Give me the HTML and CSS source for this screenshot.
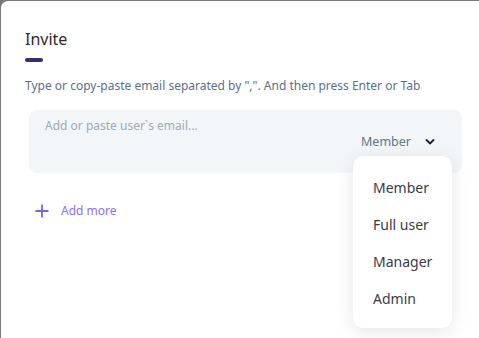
FILE: index.html
```html
<!DOCTYPE html>
<html>
    <head>
        <title>Invite</title>
        <meta name="viewport" content="width=device-width, initial-scale=1.0" />
        <link rel="stylesheet" href="styles.css">
    </head>
    <body>
        <div class="modal">
            <h3 class="title">Invite</h3>
            <div class="titleBar"></div>
            <p class="hint">Type or copy-paste email separated by ",". And then press Enter or Tab</p>
            <div class="emailBox">
                <div class="placeholder">Add or paste user`s email...</div>
                <div class="roleRow">
                    <div class="roleSelect">
                        <span>Member</span>
                        <svg width="10" height="8" viewBox="0 0 10 8">
                            <path d="M1.5 2 L5 5.5 L8.5 2" fill="none" stroke="#1f2937" stroke-width="2" stroke-linecap="round" stroke-linejoin="round" />
                        </svg>
                        <ul class="menu">
                            <li>Member</li>
                            <li>Full user</li>
                            <li>Manager</li>
                            <li>Admin</li>
                        </ul>
                    </div>
                </div>
            </div>
            <div class="addMore">
                <svg width="14" height="14" viewBox="0 0 14 14">
                    <path d="M7 0.5 V13.5 M0.5 7 H13.5" stroke="#7b61e8" stroke-width="1.8" />
                </svg>
                <span>Add more</span>
            </div>
        </div>
    </body>
</html>
```

FILE: styles.css
```css
html,
body {
    margin: 0;
    height: 100%;
}

body {
    background: #7a7a7a;
    font-family: 'Noto Sans', 'Open Sans', sans-serif;
    padding: 1px 0 0 1px;
    box-sizing: border-box;
    overflow: hidden;
}

.modal {
    background: #fff;
    border-radius: 7px 0 0 0;
    height: 100%;
    padding: 27px 17px 0 24px;
    box-sizing: border-box;
}

.title {
    margin: 0;
    font-size: 16px;
    font-weight: 400;
    color: #2b2b2b;
    line-height: 22px;
}

.titleBar {
    width: 18px;
    height: 4px;
    border-radius: 2px;
    background: #3b2c6b;
    margin-top: 8px;
}

.hint {
    margin: 16px 0 0;
    font-size: 12px;
    line-height: 16px;
    color: #5b6f86;
}

.emailBox {
    margin: 16px 0 0 4px;
    background: #f3f6f9;
    border-radius: 8px;
    height: 63px;
    padding: 7px 27px 0 16px;
    box-sizing: border-box;
}

.placeholder {
    font-size: 12px;
    line-height: 18px;
    color: #a1a9b2;
}

.roleRow {
    display: flex;
    justify-content: flex-end;
    margin-top: -2px;
}

.roleSelect {
    position: relative;
    display: flex;
    align-items: center;
    gap: 14px;
    font-size: 12.5px;
    line-height: 18px;
    color: #627589;
}

.menu {
    position: absolute;
    top: 23px;
    left: -8px;
    width: 99px;
    margin: 0;
    padding: 13px 0 11px 20px;
    box-sizing: border-box;
    list-style: none;
    background: #fff;
    border-radius: 10px;
    box-shadow: 0 4px 18px rgba(0, 0, 0, 0.1);
}

.menu li {
    font-size: 14px;
    line-height: 19px;
    color: #3a3a48;
    padding: 9px 0;
}

.addMore {
    display: flex;
    align-items: center;
    gap: 12px;
    margin: 29px 0 0 10px;
    font-size: 12px;
    color: #8d6ff2;
}
```
